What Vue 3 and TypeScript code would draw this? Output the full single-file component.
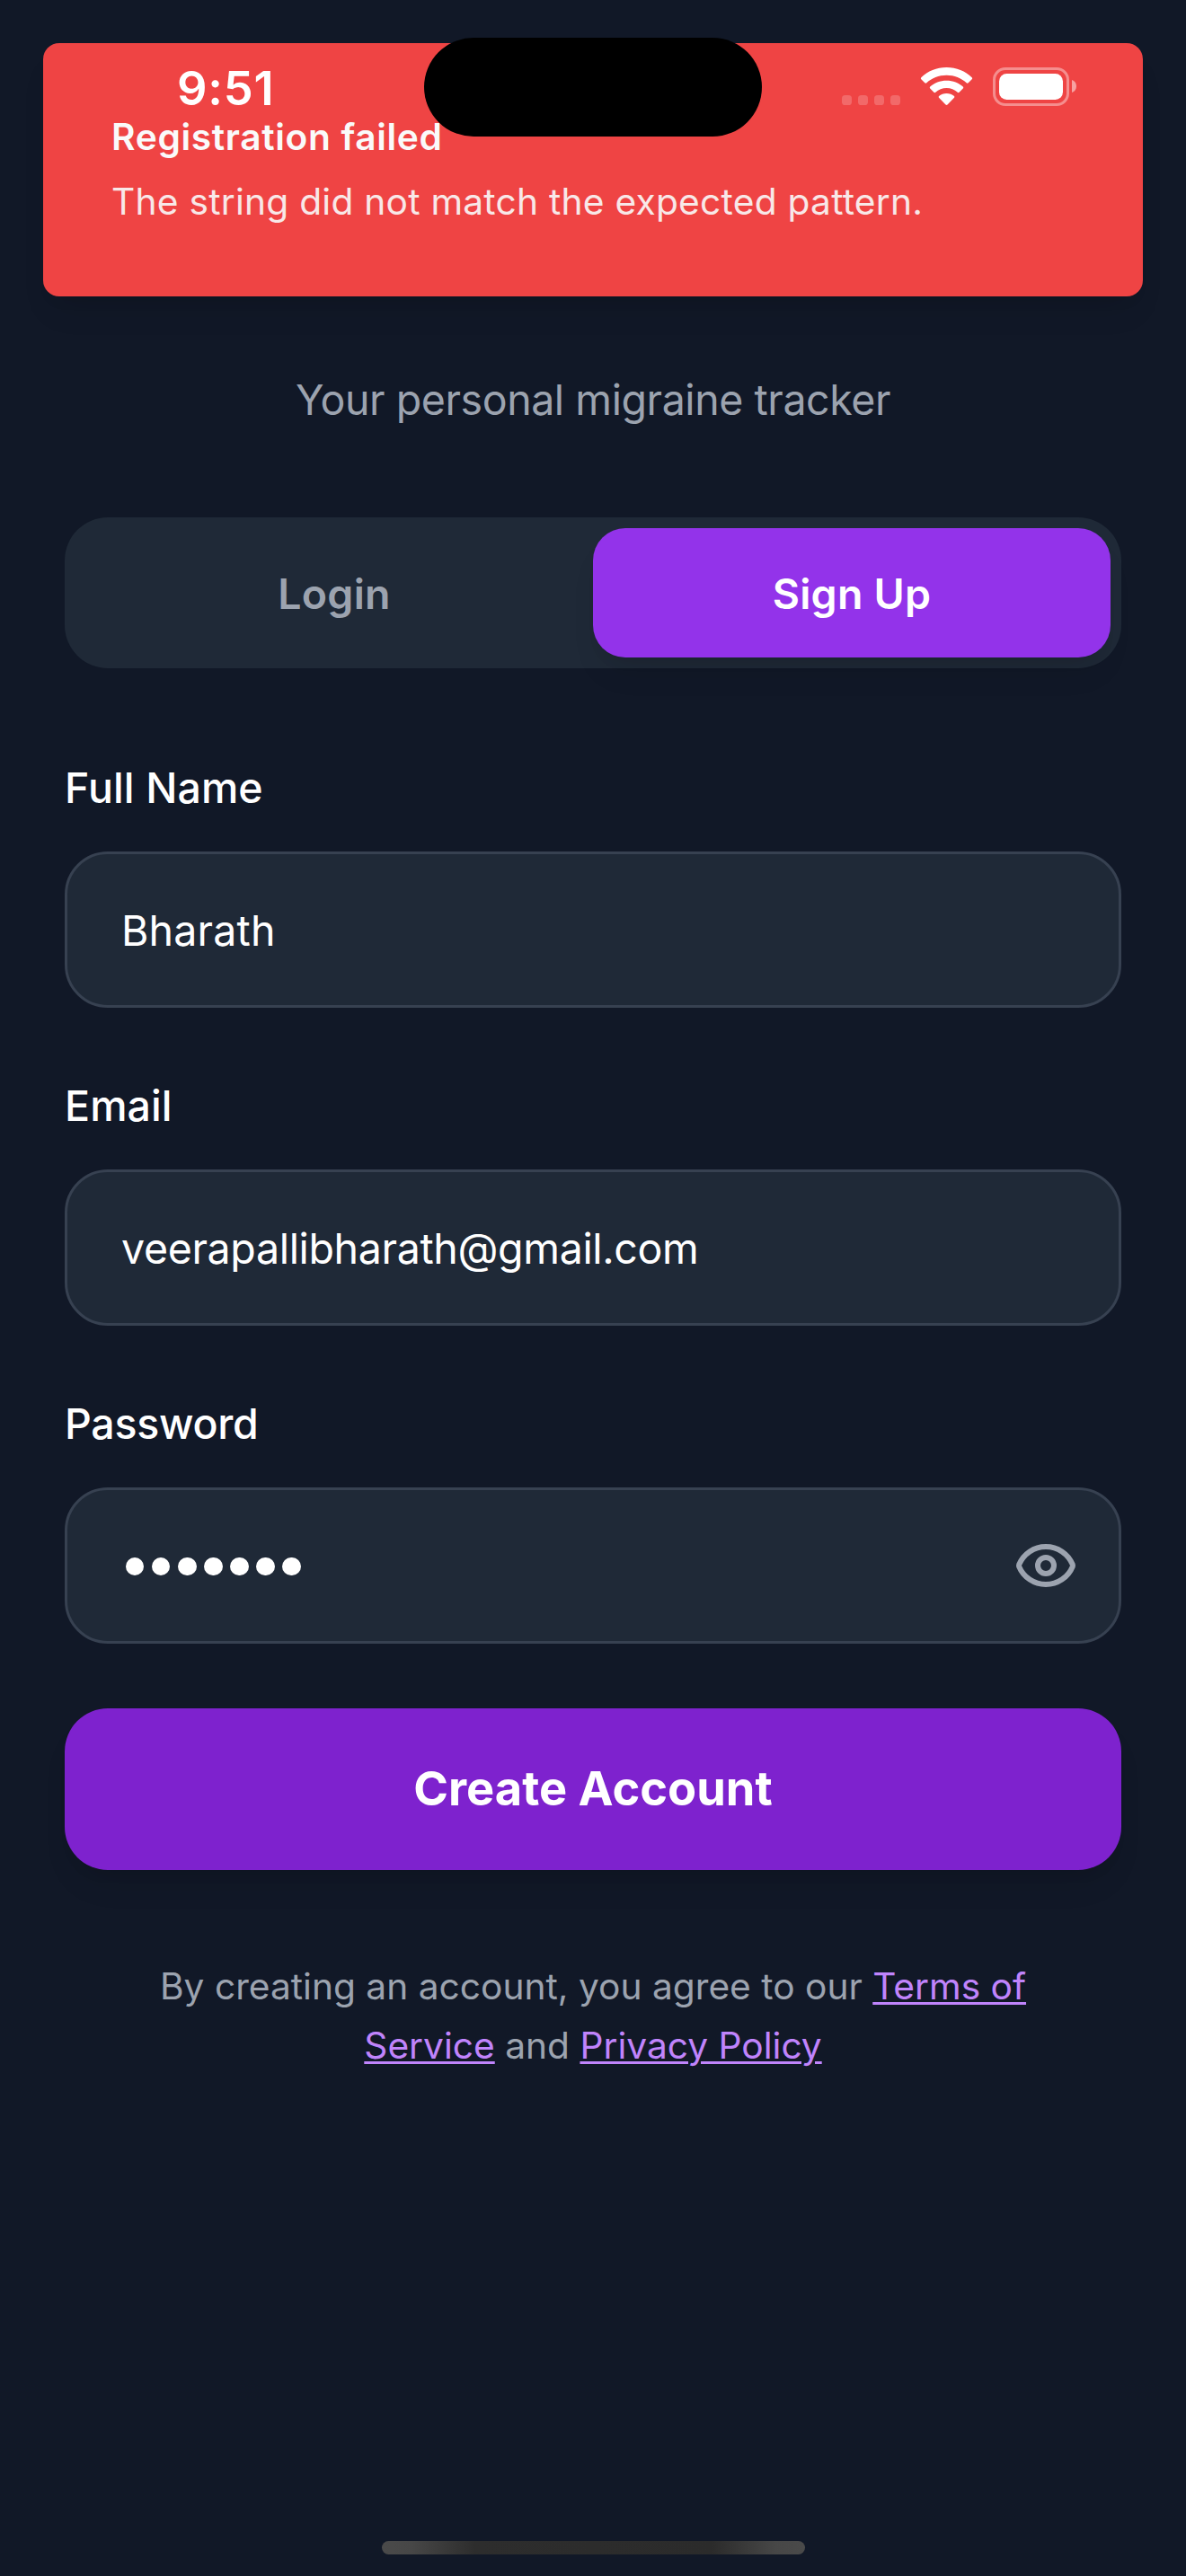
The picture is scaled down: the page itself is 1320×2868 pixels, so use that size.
<script setup lang="ts">
import { ref } from 'vue'

type Mode = 'login' | 'signup'

const mode = ref<Mode>('signup')
const fullName = ref('Bharath')
const email = ref('veerapallibharath@gmail.com')
const passwordLength = ref(7)
</script>

<template>
  <div class="screen">
    <main class="content">
      <p class="tagline">Your personal migraine tracker</p>

      <div class="tabs">
        <button class="tab login" :class="{ active: mode === 'login' }" @click="mode = 'login'">Login</button>
        <button class="tab signup" :class="{ active: mode === 'signup' }" @click="mode = 'signup'">Sign Up</button>
      </div>

      <form class="form" @submit.prevent>
        <div class="field">
          <label class="label" for="name">Full Name</label>
          <input id="name" v-model="fullName" class="input name-input" type="text" />
        </div>
        <div class="field">
          <label class="label" for="email">Email</label>
          <input id="email" v-model="email" class="input email-input" type="text" />
        </div>
        <div class="field">
          <span class="label password-label">Password</span>
          <div class="input password">
            <div class="dots"><i v-for="n in passwordLength" :key="n" class="dot"></i></div>
            <svg class="eye" viewBox="0 0 24 24" fill="none" stroke="currentColor" stroke-width="2" stroke-linecap="round" stroke-linejoin="round">
              <path d="M2.062 12.348a1 1 0 0 1 0-.696 10.75 10.75 0 0 1 19.876 0 1 1 0 0 1 0 .696 10.75 10.75 0 0 1-19.876 0" />
              <circle cx="12" cy="12" r="3" />
            </svg>
          </div>
        </div>
        <button class="submit" type="submit">Create Account</button>
      </form>

      <p class="terms">
        By creating an account, you agree to our <a>Terms of<br />Service</a> and <a>Privacy Policy</a>
      </p>
    </main>

    <div class="toast">
      <div class="toast-title">Registration failed</div>
      <div class="toast-text">The string did not match the expected pattern.</div>
    </div>

    <div class="island"></div>

    <header class="status">
      <span class="time">9:51</span>
      <svg class="status-icons" viewBox="0 0 264 48" width="264" height="48">
        <g fill="#fff" fill-opacity="0.2">
          <rect v-for="n in 4" :key="n" :x="1 + (n - 1) * 18" y="34" width="11" height="11" rx="3.6" />
        </g>
        <g fill="#fff">
          <path d="M117.5 3C128.500 3 138.500 7.200 145.700 14.200Q146.700 15.200 145.700 16.200L141.700 20.300Q140.700 21.200 139.700 20.300C133.900 14.900 126.200 11.800 117.500 11.800S101.100 14.900 95.300 20.300Q94.300 21.200 93.300 20.300L89.300 16.200Q88.300 15.200 89.300 14.200C96.500 7.200 106.500 3 117.500 3Z" />
          <path d="M117.500 17.700C124.800 17.700 131 20.300 135.800 24.600Q136.800 25.600 135.800 26.600L131.600 30.800Q130.700 31.600 129.700 30.800C126.400 27.900 122.200 26.100 117.500 26.100S108.600 27.900 105.300 30.800Q104.300 31.600 103.400 30.800L99.200 26.600Q98.200 25.600 99.200 24.600C104 20.300 110.200 17.700 117.500 17.700Z" />
          <path d="M117.500 32.100C120.800 32.100 123.700 33.200 126 35Q126.800 35.900 126 36.800L118.500 44.500Q117.500 45.400 116.500 44.500L109 36.800Q108.200 35.900 109 35C111.300 33.200 114.200 32.100 117.500 32.100Z" />
        </g>
        <rect x="170.500" y="4.500" width="82" height="40" rx="12.500" fill="none" stroke="#fff" stroke-opacity="0.4" stroke-width="3" />
        <rect x="176" y="10" width="71" height="29" rx="8.500" fill="#fff" />
        <path d="M257 17C260 17.900 262 20.500 262 24S260 30.100 257 31Z" fill="#fff" fill-opacity="0.5" />
      </svg>
    </header>

    <div class="home"></div>
  </div>
</template>

<style>
body {
  background: #111827;
}
</style>

<style scoped>
.screen {
  position: relative;
  box-sizing: border-box;
  width: 1320px;
  height: 2868px;
  overflow: hidden;
  background: #111827;
  font-family: Inter, "Liberation Sans", sans-serif;
  color: #fff;
}

.content {
  padding: 409px 72px 0;
}

.tagline {
  margin: 0 0 95px;
  text-align: center;
  font-size: 46.5px;
  line-height: 72px;
  letter-spacing: -0.43px;
  color: #9ca3af;
}

.tabs {
  display: flex;
  box-sizing: border-box;
  height: 168px;
  padding: 12px;
  border-radius: 48px;
  background: #1f2937;
}

.tab {
  flex: 1;
  border: 0;
  padding: 2px 0 0;
  border-radius: 36px;
  background: none;
  font: 600 46.5px/72px Inter, "Liberation Sans", sans-serif;
  letter-spacing: 0.25px;
  color: #9ca3af;
}

.tab.active {
  background: #9333ea;
  color: #fff;
  box-shadow: 0 24px 36px -12px rgb(0 0 0 / 0.1), 0 12px 18px -12px rgb(0 0 0 / 0.1);
}

.form {
  display: flex;
  flex-direction: column;
  gap: 72px;
  margin-top: 96px;
}

.field {
  display: flex;
  flex-direction: column;
  gap: 36px;
}

.label {
  box-sizing: border-box;
  height: 72px;
  padding-top: 1px;
  font-size: 46.5px;
  line-height: 72px;
  font-weight: 500;
  letter-spacing: 0.1px;
}

.password-label {
  letter-spacing: -0.3px;
}

.input {
  box-sizing: border-box;
  width: 100%;
  height: 174px;
  padding: 2px 60px 0;
  border: 3px solid #374151;
  border-radius: 48px;
  background: #1f2937;
  font: 400 46.5px/72px Inter, "Liberation Sans", sans-serif;
  color: #fff;
  outline: none;
}

.name-input {
  letter-spacing: 0.19px;
}

.email-input {
  letter-spacing: -0.34px;
}

.password {
  display: flex;
  align-items: center;
  justify-content: space-between;
  padding: 0 45px 0 65px;
}

.dots {
  display: flex;
  gap: 8.7px;
  padding-top: 2px;
}

.dot {
  width: 20.4px;
  height: 20.4px;
  border-radius: 50%;
  background: #fff;
}

.eye {
  width: 72px;
  height: 72px;
  color: #9ca3af;
}

.submit {
  height: 180px;
  padding: 0 0 2px;
  border: 0;
  border-radius: 48px;
  background: #7e22ce;
  font: 700 52.4px/84px Inter, "Liberation Sans", sans-serif;
  color: #fff;
  box-shadow: 0 24px 36px -12px rgb(0 0 0 / 0.1), 0 12px 18px -12px rgb(0 0 0 / 0.1);
}

.terms {
  margin: 97px 0 0;
  text-align: center;
  font-size: 40.7px;
  line-height: 66px;
  color: #9ca3af;
}

.terms a {
  color: #c084fc;
  text-decoration: underline;
  text-decoration-thickness: 3px;
  text-underline-offset: 3px;
}

.toast {
  position: absolute;
  top: 48px;
  left: 48px;
  display: flex;
  flex-direction: column;
  justify-content: center;
  gap: 12px;
  box-sizing: border-box;
  width: 1224px;
  height: 282px;
  padding-left: 76px;
  border-radius: 18px;
  background: #ef4444;
  box-shadow: 0 24px 36px -12px rgb(0 0 0 / 0.1), 0 12px 18px -12px rgb(0 0 0 / 0.1);
}

.toast-title,
.toast-text {
  font-size: 40.7px;
  line-height: 60px;
  color: #fafafa;
  white-space: nowrap;
}

.toast-title {
  font-weight: 600;
  letter-spacing: 0.65px;
}

.toast-text {
  letter-spacing: 0.24px;
  opacity: 0.9;
}

.island {
  position: absolute;
  top: 42px;
  left: 472px;
  width: 376px;
  height: 110px;
  border-radius: 55px;
  background: #000;
}

.status {
  position: absolute;
  top: 72px;
  left: 197px;
  right: 120px;
  display: flex;
  justify-content: space-between;
  align-items: flex-start;
}

.time {
  font-size: 52.4px;
  line-height: 52px;
  font-weight: 600;
  letter-spacing: 0.78px;
}

.home {
  position: absolute;
  left: 425px;
  bottom: 24px;
  width: 471px;
  height: 15px;
  border-radius: 8px;
  background: linear-gradient(90deg, #4a4a4a 0%, #474747 7%, #2d2d2d 22%, #2b2b2b 78%, #474747 93%, #4a4a4a 100%);
}
</style>
